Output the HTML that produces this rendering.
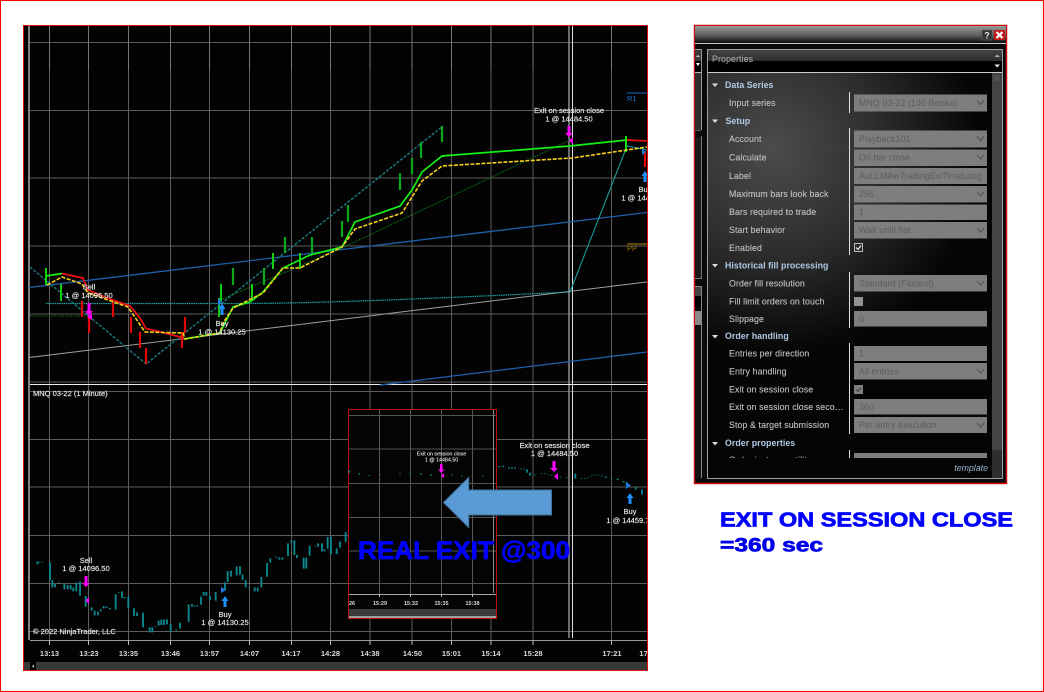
<!DOCTYPE html>
<html lang="en"><head><meta charset="utf-8"><title>Exit on session close</title>
<style>
html,body{margin:0;padding:0;background:#fff}
svg{display:block;filter:blur(.35px)}
text{font-family:"Liberation Sans",sans-serif}
.l{font-size:7.5px;fill:#e8e8e8;text-anchor:middle;stroke:#e8e8e8;stroke-width:.15px}
.p{font-size:8.8px;fill:#c0c0c0;letter-spacing:.1px;stroke:#c0c0c0;stroke-width:.12px}
.s{font-size:8.8px;fill:#b0cbe6;font-weight:bold;letter-spacing:.05px}
.v{font-size:8.8px;fill:#5c5c5c;letter-spacing:.1px}
</style></head><body>
<svg xmlns="http://www.w3.org/2000/svg" width="1044" height="692" viewBox="0 0 1044 692">
<defs>
<clipPath id="c"><rect x="24" y="26" width="623" height="644"/></clipPath>
<clipPath id="pc"><rect x="708" y="73" width="284" height="385"/></clipPath>
<linearGradient id="tb" x1="0" y1="0" x2="0" y2="1"><stop offset="0" stop-color="#999"/><stop offset=".55" stop-color="#5e5e5e"/><stop offset="1" stop-color="#0a0a0a"/></linearGradient>
<linearGradient id="hd" x1="0" y1="0" x2="0" y2="1"><stop offset="0" stop-color="#444"/><stop offset="1" stop-color="#2e2e2e"/></linearGradient>
<radialGradient id="pg" gradientUnits="userSpaceOnUse" cx="775" cy="150" r="205"><stop offset="0" stop-color="#4c4c4c"/><stop offset=".5" stop-color="#2e2e2e"/><stop offset="1" stop-color="#050505"/></radialGradient>
</defs>
<rect width="1044" height="692" fill="#fff"/>
<rect x=".5" y=".5" width="1043" height="691" fill="none" stroke="#f00"/>

<!-- CHART -->
<rect x="23.5" y="25.5" width="624" height="645" fill="#030303" stroke="#e01010"/>
<g clip-path="url(#c)">
<g stroke="#5c5c5c" stroke-width="1" fill="none">
<path d="M30 42.5H648M30 110.5H648M30 178H648M30 246H648M30 314H648M30 382H648M30 391.5H648M30 439.5H648M30 487H648M30 535.5H648M30 583.5H648M30 631.5H648"/>
<path d="M49.5 26V640M88.5 26V640M128.5 26V640M170.5 26V640M209.5 26V640M249.5 26V640M291.5 26V640M330.5 26V640M370 26V640M412 26V640M451.5 26V640M491 26V640M533 26V640M611.5 26V640"/>
</g>
<path d="M49.5 26V70M88.5 26V70M128.5 26V70M170.5 26V70M209.5 26V70M249.5 26V70M291.5 26V70M330.5 26V70M370 26V70M412 26V70M451.5 26V70M491 26V70M533 26V70M611.5 26V70" stroke="#777" fill="none"/>
<path d="M29 26V640" stroke="#808080" stroke-width="2"/>
<path d="M569 26V638" stroke="#909090" stroke-width="1.5"/>
<path d="M572.5 26V638" stroke="#ddd" stroke-width="1"/>
<path d="M30 384.5H648" stroke="#eee"/>
<path d="M30 640.5H648" stroke="#999"/>
<path d="M49.5 640V645M88.5 640V645M128.5 640V645M170.5 640V645M209.5 640V645M249.5 640V645M291.5 640V645M330.5 640V645M370 640V645M412 640V645M451.5 640V645M491 640V645M533 640V645M611.5 640V645" stroke="#bbb"/>

<!-- trend lines -->
<path d="M29 287.5L647 212.5" stroke="#1f5fa8" stroke-width="1.3" fill="none"/>
<path d="M380 385L647 352" stroke="#1f5fa8" stroke-width="1.3" fill="none"/>
<path d="M29 357.5L647 282" stroke="#a0a0a0" stroke-width="1" fill="none"/>
<path d="M30 267L146 364L443 126" stroke="#1b7c82" stroke-width="1.4" stroke-dasharray="3 1.5" fill="none"/>
<path d="M46 303.5L220 303.5C300 304 400 300 570 292" stroke="#1fa0a0" stroke-width="1.2" stroke-dasharray="1.5 .7" fill="none"/>
<path d="M570 292L627 146L648 150" stroke="#1a9a9a" stroke-width="1.1" fill="none"/>
<path d="M30 316H88M220 300L342 248L570 140" stroke="#0d7a1a" stroke-width="1.1" stroke-dasharray="1.5 1.2" fill="none"/>
<path d="M627 93H648" stroke="#1c6fc0"/><path d="M627 244H648" stroke="#7a5f10" stroke-width="1.5"/>
<text x="627" y="101" font-size="7.5" fill="#1c78d0">R1</text>
<text x="627" y="251" font-size="7.5" fill="#9a7a10">PP</text>

<!-- Bars upper -->
<path d="M46 268V285M61 284V301M219 298V317M221 284V301M252 284V301M273 253V269M300 253V269" stroke="#10d010" stroke-width="2"/>
<path d="M233 268V285M264 268V285M285 237V253M312 237V253M342 221V237M348 205V222M400 173V190M412 158V174M421 142V158M442 126V142" stroke="#0aa81a" stroke-width="2.2"/>
<path d="M626 136V152" stroke="#10e010" stroke-width="2"/>
<path d="M82 301V317M89 317V333M113 301V317M131 317V333M140 332V348M146 348V364M182 332V348M185 317V333M645 151V167" stroke="#e00808" stroke-width="2.2"/>

<!-- MA lines -->
<path d="M46 276L62 273.5" stroke="#14f014" stroke-width="1.7" fill="none"/>
<path d="M62 273.5L83 278L88 290L110 299L130 306L140 318L146 328.5L165 333L184 338" stroke="#f01010" stroke-width="1.7" fill="none"/>
<path d="M184 339L220 333L233 307L250 302L263 292L283 268L310 255L342 247L355 222L400 206L412 190L422 172L442 156L570 146L627 140" stroke="#14f014" stroke-width="1.7" fill="none"/>
<path d="M627 140L648 141" stroke="#f01010" stroke-width="1.7" fill="none"/>
<path d="M47 285L62 277L82 284L88 293L128 307L145 332L183 333L185 339L220 333L223 323L233 308L263 293L283 268L300 268L342 247L355 229L402 213L422 181L442 166L572 158L627 150L647 147" stroke="#f8d020" stroke-width="1.6" stroke-dasharray="4 1.5" fill="none"/>

<!-- upper labels & markers -->
<path d="M87.5 303H90.5V311H93L89 316L85 311H87.500Z" fill="#f0f"/>
<path d="M92 314V320L87 317Z" fill="#f0f"/>
<path d="M220.500 315V309H218.500L222 303.500L225.500 309H223.500V315Z" fill="#1e90ff"/>
<path d="M218 298L222 302L218 306Z" fill="#1e78e0"/>
<path d="M567.500 126H570.500V133H573L569 137L565 133H567.500Z" fill="#f0f"/>
<path d="M573 137V144L569 140.500Z" fill="#f0f"/>
<path d="M643.500 182V176H641.500L645 171L648.500 176H646.500V182Z" fill="#1e90ff"/>
<path d="M642 149L646 152L642 155Z" fill="#1e78e0"/>
<text class="l" x="89" y="289.500">Sell</text><text class="l" x="89" y="298">1 @ 14096.50</text>
<text class="l" x="222" y="326">Buy</text><text class="l" x="222" y="334.500">1 @ 14130.25</text>
<text class="l" x="569" y="113">Exit on session close</text><text class="l" x="569" y="121.500">1 @ 14484.50</text>
<text class="l" x="645" y="192">Buy</text><text class="l" x="645" y="200.500">1 @ 14459.75</text>

<!-- Lower bars (coordinates in 3x space) -->
<g transform="translate(0 380) scale(.33333)" stroke="#0a8a90" stroke-width="5.500" fill="none">
<path d="M112 545V553M118 545V548M127 546V548M150 547V600M157 600V623M165 612V622M176 607V609M193 612V628M203 615V628M212 615V628M220 622V634M229 608V634M240 605V647M257 648V680M275 682V692M284 692V706M294 695V706M302 688V694M311 678V685M320 680V684M330 684V688M347 643V689M356 636V638M366 634V654M374 651V655M385 650V684M402 685V708M411 697V708M429 698V742M449 742V757M457 742V757M466 739V741M476 722V737M484 719V735M492 718V735M501 718V733M512 732V757M529 749V752M540 728V746M566 673V726M576 672V680M584 677V680M592 676V680M603 650V674M611 636V647M619 636V647M630 648V660M647 636V662M675 607V632M683 573V606M693 572V590M710 559V586M720 559V584M728 583V600M737 600V622M746 622V624M764 622V634M773 622V634M784 591V622M801 549V590M811 535V548M828 530V533M838 532V539M847 532V539M864 490V528M874 481V488M883 481V525M891 525V534M911 533V566M919 533V566M929 498V527M946 498V500M954 490V500M966 490V514M973 508V514M983 471V506M993 471V522M1010 505V522M1020 485V503M1037 456V486"/>
</g>
<g transform="translate(340 380) scale(.33333)" stroke="#0a8a90" stroke-width="5.500" fill="none">
<path d="M478 258V262M490 257V261M507 262V266M516 262V266M525 262V266M542 266V268M552 266V268M561 268V278M570 278V287M585 284V286M605 280V282M615 280V282M625 282V284M635 284V286M661 290V292M680 291V293M706 281V296M725 294V296M735 294V296M745 291V293M755 287V289M765 283V285M775 284V286M785 287V289M797 290V294M815 293V295M833 296V300M851 303V307M860 306V318M887 320V329M906 329V344"/>
</g>

<!-- lower labels & markers -->
<text x="33" y="396" font-size="7.500" fill="#e8e8e8" stroke="#e8e8e8" stroke-width=".15">MNQ 03-22 (1 Minute)</text>
<text x="33" y="634" font-size="7.500" fill="#e8e8e8" stroke="#e8e8e8" stroke-width=".15">© 2022 NinjaTrader, LLC</text>
<path d="M84.500 576H87.500V583H90L86 587L82 583H84.500Z" fill="#f0f"/>
<path d="M89 597V604L85.500 600.500Z" fill="#f0f"/>
<path d="M221 587V593L226 590Z" fill="#1e78e0"/>
<path d="M223.500 607V601H221.500L225 596L228.500 601H226.500V607Z" fill="#1e90ff"/>
<text class="l" x="86" y="563">Sell</text><text class="l" x="86" y="571">1 @ 14096.50</text>
<text class="l" x="225" y="617">Buy</text><text class="l" x="225" y="625">1 @ 14130.25</text>
<path d="M552.500 461H555.500V468H558L554 472L550 468H552.500Z" fill="#f0f"/>
<path d="M558 473V480L554 476.500Z" fill="#f0f"/>
<path d="M626 482V489L631 485.500Z" fill="#1e78e0"/>
<path d="M628.500 504V498H626.500L630 493L633.500 498H631.500V504Z" fill="#1e90ff"/>
<text class="l" x="554.500" y="448">Exit on session close</text><text class="l" x="554.500" y="456">1 @ 14484.50</text>
<text class="l" x="630" y="514">Buy</text><text class="l" x="630" y="523">1 @ 14459.75</text>

<!-- time axis -->
<g font-size="7.500" font-weight="bold" fill="#d8d8d8" text-anchor="middle">
<text x="49.500" y="656">13:13</text><text x="89" y="656">13:23</text><text x="128.500" y="656">13:35</text><text x="170.500" y="656">13:46</text><text x="209.500" y="656">13:57</text><text x="249.500" y="656">14:07</text><text x="291" y="656">14:17</text><text x="330.500" y="656">14:28</text><text x="370" y="656">14:38</text><text x="412.500" y="656">14:50</text><text x="451.500" y="656">15:01</text><text x="491" y="656">15:14</text><text x="533" y="656">15:28</text><text x="612" y="656">17:21</text><text x="649" y="656">17:33</text>
</g>
<rect x="24" y="662" width="624" height="8" fill="#383838"/>
<rect x="30" y="662" width="6" height="8" fill="#000"/>
<path d="M34 664.500V668L32 666.200Z" fill="#ccc"/>
</g>

<!-- INSET -->
<rect x="348.500" y="409.500" width="148" height="209" fill="#040404" stroke="#c01010"/>
<g stroke="#555" fill="none">
<path d="M349 415.500H496M349 449H496M349 483.500H496M349 517.500H496M349 551H496M349 583.500H496"/>
<path d="M379.500 410V597M410.500 410V597M441.500 410V597M472.500 410V597"/>
</g>
<path d="M493.500 410V593" stroke="#888"/>
<path d="M349 594.500H496" stroke="#aaa"/>
<path d="M379.500 594V597M410.500 594V597M441.500 594V597M472.500 594V597" stroke="#bbb"/>
<g font-size="5.500" fill="#d8d8d8" text-anchor="middle" font-weight="bold">
<text x="352" y="605">26</text><text x="380" y="605">15:29</text><text x="411" y="605">15:32</text><text x="441.500" y="605">15:35</text><text x="472.500" y="605">15:38</text>
</g>
<rect x="349" y="609" width="147" height="7" fill="#3a3a3a"/>
<rect x="349" y="616" width="147" height="2" fill="#a0a0a0"/>
<g transform="translate(340 380) scale(.33333)" stroke="#0a8a90" stroke-width="5.500" fill="none">
<path d="M27 272V278M57 280V284M87 285V287M120 283V285M180 281V283M210 281V283M243 280V284M273 283V287M336 284V286M366 287V289M397 289V291M429 287V289"/>
</g>
<path d="M440 464H442.500V469.500H444.500L441.200 473L438 469.500H440Z" fill="#f0f"/>
<path d="M444 473V478L441 475.500Z" fill="#f0f"/>
<text x="441.500" y="455.500" font-size="5.300" fill="#e8e8e8" stroke="#e8e8e8" stroke-width=".1" text-anchor="middle">Exit on session close</text>
<text x="441.500" y="461.500" font-size="5.300" fill="#e8e8e8" stroke="#e8e8e8" stroke-width=".1" text-anchor="middle">1 @ 14484.50</text>

<!-- Blue arrow & overlay text -->
<path d="M443.500 502.500L468.700 477.500V490H551.500V515H468.700V527.500Z" fill="#5b9bd5" stroke="#41719c" stroke-width="1"/>
<text x="358" y="559" font-size="25" font-weight="bold" fill="#0000ff" stroke="#0000ff" stroke-width=".7" textLength="212" lengthAdjust="spacingAndGlyphs">REAL EXIT @300</text>

<!-- PROPERTIES WINDOW -->
<rect x="694.500" y="25.500" width="312" height="458" fill="#0a0a0a" stroke="#d00a0a" stroke-width="1.500"/>
<rect x="695" y="26" width="311" height="17" fill="url(#tb)"/>
<path d="M695 43.500H1006" stroke="#c8c8c8"/>
<rect x="982" y="30" width="10" height="10" fill="#333" stroke="#666" stroke-width=".5"/>
<text x="987" y="38.500" font-size="9" font-weight="bold" fill="#e4e4e4" text-anchor="middle">?</text>
<rect x="994" y="30" width="11" height="10" fill="#c21818"/>
<path d="M996.500 32L1002.500 38M1002.500 32L996.500 38" stroke="#fff" stroke-width="2.200"/>

<!-- left stub -->
<path d="M695 49.500H701.500V130" stroke="#999" fill="none"/>
<rect x="695" y="50" width="6" height="11" fill="#3a3a3a"/>
<rect x="695" y="61" width="6" height="11" fill="#000"/>
<path d="M695 72.500H701" stroke="#bbb"/>
<rect x="695" y="73" width="6" height="57" fill="#2e2e2e"/>
<path d="M696 57L698 55L700 57Z" fill="#ccc"/><path d="M696 63L700 63L698 66Z" fill="#fff"/>
<path d="M695 130.500H701" stroke="#555"/>
<path d="M701.500 136V278.500H695" stroke="#777" fill="none"/>
<rect x="695" y="137" width="6" height="141" fill="#1a1a1a"/>
<path d="M695 286.500H701.500V478" stroke="#888" fill="none"/>
<rect x="695" y="287" width="6" height="9" fill="#444"/>
<rect x="695" y="296" width="6" height="11" fill="#000"/>
<rect x="695" y="311" width="6" height="14" fill="#8a8a8a"/>
<rect x="695" y="326" width="6" height="152" fill="#111"/>

<!-- main box -->
<rect x="707.500" y="49.500" width="295" height="429" fill="#050505" stroke="#a0a0a0"/>
<rect x="708" y="50" width="294" height="11" fill="url(#hd)"/>
<rect x="708" y="61" width="294" height="11" fill="#000"/>
<path d="M708 72.500H1002" stroke="#ccc"/>
<text x="712" y="62" font-size="8.800" fill="#a8a8a8" stroke="#a8a8a8" stroke-width=".12" letter-spacing=".1">Properties</text>
<path d="M994.500 57L997.200 54.500L1000 57Z" fill="#aaa"/>
<path d="M994.500 64.500H1000L997.200 67.500Z" fill="#eee"/>
<rect x="708" y="73" width="284" height="385" fill="url(#pg)"/>
<rect x="992" y="73" width="10" height="377" fill="#444"/>
<rect x="992" y="450" width="10" height="28" fill="#2e2e2e"/>
<path d="M994 76H1000M994 78H1000M994 80H1000" stroke="#5c5c5c"/>

<g clip-path="url(#pc)">
<path d="M849.500 92V113M849.500 128V255M849.500 272V328M849.500 343V434M849.500 450V470" stroke="#dedede"/>
<g fill="#dedede"><path d="M712 83.500H718L715 87Z"/><path d="M712 119.500H718L715 123Z"/><path d="M712 264H718L715 267.500Z"/><path d="M712 335H718L715 338.500Z"/><path d="M712 442H718L715 445.500Z"/></g>
<text class="s" x="725" y="88">Data Series</text>
<text class="s" x="725.500" y="124">Setup</text>
<text class="s" x="725" y="268.500">Historical fill processing</text>
<text class="s" x="725" y="339">Order handling</text>
<text class="s" x="725" y="446">Order properties</text>
<g>
<text class="p" x="729" y="106">Input series</text>
<text class="p" x="729" y="142">Account</text>
<text class="p" x="729" y="160.500">Calculate</text>
<text class="p" x="729" y="179">Label</text>
<text class="p" x="729" y="197">Maximum bars look back</text>
<text class="p" x="729" y="215">Bars required to trade</text>
<text class="p" x="729" y="233">Start behavior</text>
<text class="p" x="729" y="251">Enabled</text>
<text class="p" x="729" y="286.500">Order fill resolution</text>
<text class="p" x="729" y="304.500">Fill limit orders on touch</text>
<text class="p" x="729" y="322">Slippage</text>
<text class="p" x="729" y="356.500">Entries per direction</text>
<text class="p" x="729" y="374.500">Entry handling</text>
<text class="p" x="729" y="392.500">Exit on session close</text>
<text class="p" x="729" y="410">Exit on session close seco…</text>
<text class="p" x="729" y="428">Stop &amp; target submission</text>
<text class="p" x="729" y="463">Order instance utility</text>
</g>
<g fill="#7e7e7e">
<rect x="854" y="94.500" width="133" height="17"/>
<rect x="854" y="130.500" width="133" height="17"/>
<rect x="854" y="149.500" width="133" height="16.500"/>
<rect x="854" y="168" width="133" height="16"/>
<rect x="854" y="186" width="133" height="16.500"/>
<rect x="854" y="204.500" width="133" height="15.500"/>
<rect x="854" y="222" width="133" height="16.500"/>
<rect x="854" y="275" width="133" height="16.500"/>
<rect x="854" y="311" width="133" height="15.500"/>
<rect x="854" y="346" width="133" height="15"/>
<rect x="854" y="363" width="133" height="16.500"/>
<rect x="854" y="399" width="133" height="15.500"/>
<rect x="854" y="417" width="133" height="16"/>
<rect x="854" y="453" width="133" height="16"/>
</g>
<text class="v" x="859" y="106">MNQ 03-22 (140 Renko)</text>
<text class="v" x="859" y="142">Playback101</text>
<text class="v" x="859" y="160.500">On bar close</text>
<text class="v" x="859" y="179">AuLLMAwTradingExiTimeLong</text>
<text class="v" x="859" y="197">256</text>
<text class="v" x="859" y="215">1</text>
<text class="v" x="859" y="233">Wait until flat</text>
<text class="v" x="859" y="286.500">Standard (Fastest)</text>
<text class="v" x="859" y="322">0</text>
<text class="v" x="859" y="356.500">1</text>
<text class="v" x="859" y="374.500">All entries</text>
<text class="v" x="859" y="410">360</text>
<text class="v" x="859" y="428">Per entry execution</text>
<path d="M977 100.500L980.500 104.500L984 100.500M977 136.500L980.500 140.500L984 136.500M977 155L980.500 159L984 155M977 192L980.500 196L984 192M977 228L980.500 232L984 228M977 281L980.500 285L984 281M977 369L980.500 373L984 369M977 423L980.500 427L984 423" stroke="#5a5a5a" stroke-width="1.400" fill="none"/>
<rect x="854.500" y="243.500" width="8" height="8" fill="#2a2a2a" stroke="#bbb"/>
<path d="M856 247.500L858 249.500L861 245.500" stroke="#eee" stroke-width="1.200" fill="none"/>
<rect x="854" y="297" width="9" height="9" fill="#929292"/>
<rect x="854" y="385" width="9" height="9" fill="#808080"/>
<path d="M856 389.500L858 391.500L861 387.500" stroke="#444" stroke-width="1.200" fill="none"/>
</g>
<rect x="708" y="458" width="284" height="20" fill="#050505"/>
<text x="988" y="471" font-size="8.800" font-style="italic" fill="#98b2ca" text-anchor="end">template</text>

<!-- Caption -->
<text x="720" y="526.700" font-size="20" font-weight="bold" fill="#0000ff" stroke="#0000ff" stroke-width=".7" textLength="293" lengthAdjust="spacingAndGlyphs">EXIT ON SESSION CLOSE</text>
<text x="720" y="551.700" font-size="19" font-weight="bold" fill="#0000e8" stroke="#0000e8" stroke-width=".7" textLength="103" lengthAdjust="spacingAndGlyphs">=360 sec</text>
</svg>
</body></html>
